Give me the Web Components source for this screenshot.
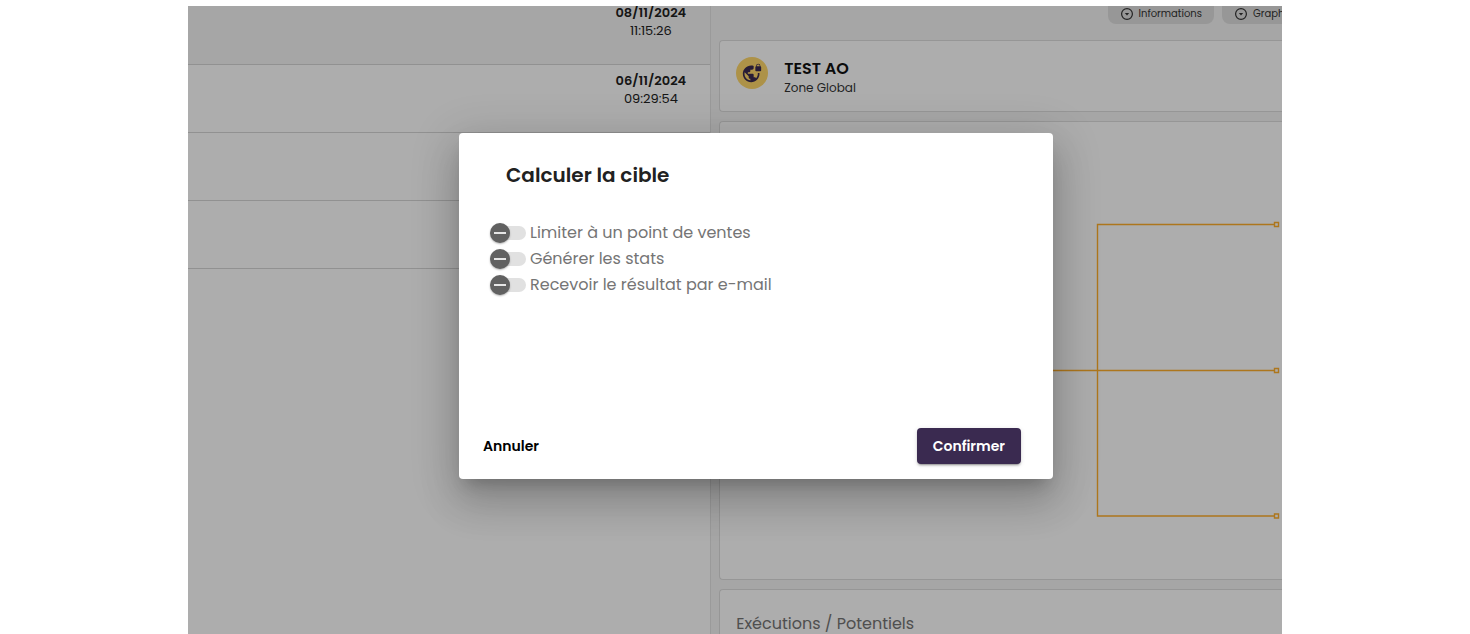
<!DOCTYPE html>
<html lang="fr">
<head>
<meta charset="UTF-8">
<meta name="viewport" content="width=device-width, initial-scale=1">
<title>Calculer la cible</title>
<style>
  body {
    margin: 0;
    background: #fff;
    font-family: Poppins, Inter, "Liberation Sans", sans-serif;
    color: #212121;
  }
</style>
</head>
<body>
<app-shell>
  <history-list slot="list">
    <history-row date="08/11/2024" time="11:15:26" selected></history-row>
    <history-row date="06/11/2024" time="09:29:54"></history-row>
    <history-row></history-row>
    <history-row></history-row>
  </history-list>

  <target-panel slot="detail">
    <chip-button slot="chips">Informations</chip-button>
    <chip-button slot="chips" cut>Graph</chip-button>
    <zone-header slot="header" name="TEST AO" zone="Zone Global"></zone-header>
    <flow-diagram slot="diagram"></flow-diagram>
    <span slot="stats">Exécutions / Potentiels</span>
  </target-panel>

  <confirm-dialog slot="dialog" heading="Calculer la cible">
    <toggle-option>Limiter à un point de ventes</toggle-option>
    <toggle-option>Générer les stats</toggle-option>
    <toggle-option>Recevoir le résultat par e-mail</toggle-option>
  </confirm-dialog>
</app-shell>

<script>
class AppShell extends HTMLElement {
  constructor() {
    super();
    this.attachShadow({ mode: 'open' });
    this.shadowRoot.innerHTML = `
      <style>
        :host {
          display: block;
          box-sizing: border-box;
          height: 100vh;
          padding: 6px 188px 0;
        }

        .app {
          position: relative;
          height: 100%;
          display: grid;
          grid-template-columns: minmax(0, 11fr) minmax(0, 12fr);
          grid-template-rows: minmax(0, 1fr);
          overflow: hidden;
        }

        .backdrop {
          position: absolute;
          inset: 0;
          box-sizing: border-box;
          display: flex;
          align-items: center;
          justify-content: center;
          padding: 0 0 28px 42px;
          background: rgba(0, 0, 0, 0.32);
        }
      </style>
      <div class="app">
        <slot name="list"></slot>
        <slot name="detail"></slot>
        <div class="backdrop"><slot name="dialog"></slot></div>
      </div>
    `;
  }
}

class HistoryList extends HTMLElement {
  constructor() {
    super();
    this.attachShadow({ mode: 'open' });
    this.shadowRoot.innerHTML = `
      <style>
        :host {
          display: block;
          background: #fff;
          border-right: 1px solid #e4e4e4;
        }

        /* list is scrolled a little past its first row */
        .rows {
          margin-top: -9px;
        }
      </style>
      <div class="rows"><slot></slot></div>
    `;
  }
}

class HistoryRow extends HTMLElement {
  constructor() {
    super();
    this.attachShadow({ mode: 'open' });
  }

  connectedCallback() {
    const date = this.getAttribute('date') || '';
    const time = this.getAttribute('time') || '';
    this.shadowRoot.innerHTML = `
      <style>
        :host {
          display: flex;
          justify-content: flex-end;
          box-sizing: border-box;
          height: 68px;
          padding: 7px 24px 0 0;
          border-bottom: 1px solid #d6d6d6;
        }

        :host([selected]) {
          background: #f5f5f5;
        }

        .when {
          font-size: 13px;
          line-height: 18px;
          text-align: center;
        }

        .date {
          font-weight: 600;
        }
      </style>
      <div class="when">
        <div class="date">${date}</div>
        <div>${time}</div>
      </div>
    `;
  }
}

class TargetPanel extends HTMLElement {
  constructor() {
    super();
    this.attachShadow({ mode: 'open' });
    this.shadowRoot.innerHTML = `
      <style>
        :host {
          display: flex;
          flex-direction: column;
          gap: 9px;
          padding-left: 8px;
          background: #f5f5f5;
        }

        .toolbar {
          display: flex;
          justify-content: flex-end;
          gap: 8px;
          height: 25px;
        }

        .card {
          box-sizing: border-box;
          background: #fff;
          border: 1px solid #dedede;
          border-right: 0;
          border-radius: 4px 0 0 4px;
        }

        .header {
          height: 72px;
          padding: 16px;
        }

        .diagram {
          flex: 1;
          display: flex;
          align-items: center;
          justify-content: flex-end;
          padding-top: 38px;
        }

        .stats {
          height: 45px;
          padding: 22px 16px 0;
          border-bottom: 0;
          border-radius: 4px 0 0 0;
          font-size: 16px;
          line-height: 24px;
          white-space: nowrap;
          color: #757575;
        }
      </style>
      <div class="toolbar"><slot name="chips"></slot></div>
      <div class="card header"><slot name="header"></slot></div>
      <div class="card diagram"><slot name="diagram"></slot></div>
      <div class="card stats"><slot name="stats"></slot></div>
    `;
  }
}

class ChipButton extends HTMLElement {
  constructor() {
    super();
    this.attachShadow({ mode: 'open' });
    this.shadowRoot.innerHTML = `
      <style>
        :host {
          display: block;
          height: 18px;
          overflow: hidden;
          border-radius: 0 0 8px 8px;
          background: #dfdfdf;
        }

        :host([cut]) {
          flex: 0 0 60px;
          border-radius: 0 0 0 8px;
        }

        button {
          display: flex;
          align-items: center;
          gap: 5px;
          height: 16px;
          padding: 0 12px;
          border: 0;
          background: none;
          color: #333;
          font: inherit;
          font-size: 10px;
          line-height: 16px;
          white-space: nowrap;
        }

        svg {
          flex: none;
        }
      </style>
      <button type="button">
        <svg width="14" height="14" viewBox="0 0 14 14" aria-hidden="true">
          <circle cx="7" cy="7" r="5.4" fill="none" stroke="#333" stroke-width="1.2"/>
          <path d="M4.8 6h4.4L7 8.4z" fill="#333"/>
        </svg>
        <slot></slot>
      </button>
    `;
  }
}

class ZoneHeader extends HTMLElement {
  constructor() {
    super();
    this.attachShadow({ mode: 'open' });
  }

  connectedCallback() {
    this.shadowRoot.innerHTML = `
      <style>
        :host {
          display: flex;
          gap: 16px;
        }

        .badge {
          display: flex;
          align-items: center;
          justify-content: center;
          width: 32px;
          height: 32px;
          border-radius: 50%;
          background: #ffd86b;
        }

        .name {
          font-size: 16px;
          line-height: 24px;
          font-weight: 600;
          color: #111;
        }

        .zone {
          font-size: 12px;
          line-height: 14px;
          color: #333;
        }
      </style>
      <div class="badge">
        <svg width="20" height="20" viewBox="0 0 24 24" fill="#3a2a50" aria-hidden="true">
          <path d="M22 4v-.5C22 2.12 20.88 1 19.5 1S17 2.12 17 3.5V4c-.55 0-1 .45-1 1v4c0 .55.45 1 1 1h5c.55 0 1-.45 1-1V5c0-.55-.45-1-1-1zm-.8 0h-3.4v-.5c0-.94.76-1.7 1.7-1.7s1.7.76 1.7 1.7V4zm-2.28 8c.04.33.08.66.08 1 0 2.08-.8 3.97-2.1 5.39-.26-.81-1-1.39-1.9-1.39h-1v-3c0-.55-.45-1-1-1H7v-2h2c.55 0 1-.45 1-1V8h2c1.1 0 2-.9 2-2V3.46c-.95-.3-1.95-.46-3-.46C5.48 3 1 7.48 1 13s4.48 10 10 10 10-4.48 10-10c0-.34-.02-.67-.05-1h-2.03zM10 20.93c-3.95-.49-7-3.85-7-7.93 0-.62.08-1.21.21-1.79L8 16v1c0 1.1.9 2 2 2v1.93z"/>
        </svg>
      </div>
      <div>
        <div class="name">${this.getAttribute('name')}</div>
        <div class="zone">${this.getAttribute('zone')}</div>
      </div>
    `;
  }
}

class FlowDiagram extends HTMLElement {
  constructor() {
    super();
    this.attachShadow({ mode: 'open' });
    this.shadowRoot.innerHTML = `
      <style>
        :host {
          display: block;
        }

        svg {
          display: block;
        }
      </style>
      <svg width="260" height="300" viewBox="0 0 260 300" fill="none" stroke="#ffae2b" stroke-width="1.4" aria-hidden="true">
        <path d="M252 4.5H75.5V296H252M0 150.5H252"/>
        <path d="M252.5 2.5h4v4h-4zM252.5 148.5h4v4h-4zM252.5 294h4v4h-4z"/>
      </svg>
    `;
  }
}

class ToggleOption extends HTMLElement {
  constructor() {
    super();
    this.attachShadow({ mode: 'open' });
    this.shadowRoot.innerHTML = `
      <style>
        :host {
          display: block;
        }

        label {
          display: flex;
          align-items: center;
          gap: 4px;
          font-size: 16px;
          line-height: 26px;
          white-space: nowrap;
          color: #757575;
        }

        input {
          appearance: none;
          flex: none;
          width: 32px;
          height: 14px;
          margin: 0 0 0 4px;
          border-radius: 7px;
          background: #e1e1e1;
        }

        input::before {
          content: "";
          display: block;
          width: 20px;
          height: 20px;
          margin: -3px 0 0 -4px;
          border-radius: 50%;
          background: linear-gradient(#e6e6e6, #e6e6e6) center / 12px 2px no-repeat #616161;
          box-shadow: 0 1px 2px rgba(0, 0, 0, 0.3);
        }

        input:checked::before {
          margin-left: 16px;
          background-color: #3a2a50;
        }
      </style>
      <label><input type="checkbox" role="switch"><slot></slot></label>
    `;
  }
}

class ConfirmDialog extends HTMLElement {
  constructor() {
    super();
    this.attachShadow({ mode: 'open' });
  }

  connectedCallback() {
    this.shadowRoot.innerHTML = `
      <style>
        :host {
          display: flex;
          flex-direction: column;
          box-sizing: border-box;
          width: 594px;
          max-width: 100%;
          min-height: 346px;
          border-radius: 4px;
          background: #fff;
          box-shadow: 0 11px 15px -7px rgba(0, 0, 0, 0.2),
                      0 24px 38px 3px rgba(0, 0, 0, 0.14),
                      0 9px 46px 8px rgba(0, 0, 0, 0.12);
        }

        h2 {
          margin: 0;
          padding: 27px 47px 30px;
          font-size: 20px;
          line-height: 30px;
          font-weight: 600;
        }

        .options {
          flex: 1;
          padding: 0 31px;
        }

        .actions {
          display: flex;
          justify-content: space-between;
          padding: 0 32px 15px 8px;
        }

        button {
          height: 36px;
          padding: 0 16px;
          border: 0;
          border-radius: 4px;
          background: none;
          color: #000;
          font: inherit;
          font-size: 14px;
          font-weight: 600;
          cursor: pointer;
        }

        .confirm {
          background: #3a2a50;
          color: #fff;
          box-shadow: 0 3px 1px -2px rgba(0, 0, 0, 0.2),
                      0 2px 2px rgba(0, 0, 0, 0.14),
                      0 1px 5px rgba(0, 0, 0, 0.12);
        }
      </style>
      <h2>${this.getAttribute('heading')}</h2>
      <div class="options"><slot></slot></div>
      <div class="actions">
        <button type="button">Annuler</button>
        <button type="button" class="confirm">Confirmer</button>
      </div>
    `;
  }
}

customElements.define('app-shell', AppShell);
customElements.define('history-list', HistoryList);
customElements.define('history-row', HistoryRow);
customElements.define('target-panel', TargetPanel);
customElements.define('chip-button', ChipButton);
customElements.define('zone-header', ZoneHeader);
customElements.define('flow-diagram', FlowDiagram);
customElements.define('toggle-option', ToggleOption);
customElements.define('confirm-dialog', ConfirmDialog);
</script>
</body>
</html>
